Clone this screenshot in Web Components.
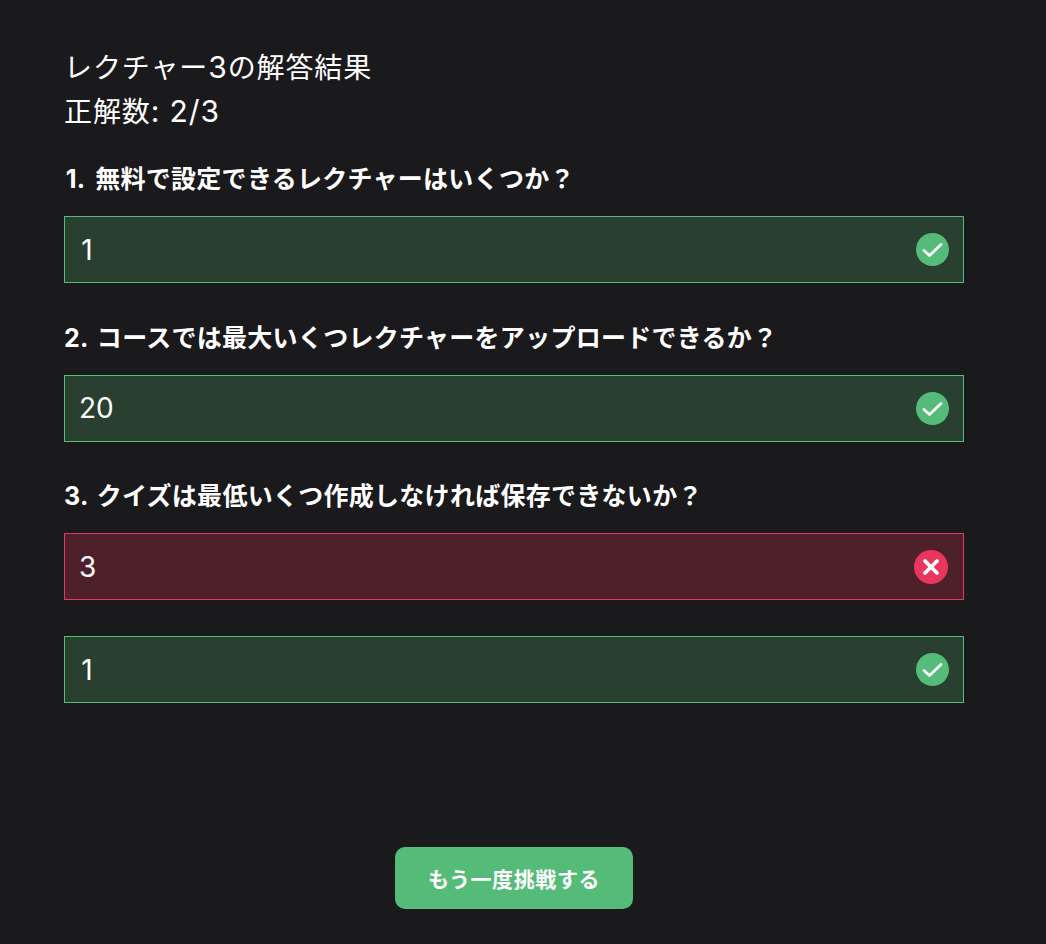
<!DOCTYPE html>
<html lang="ja">
<head>
<meta charset="utf-8">
<style>
  html, body { margin: 0; background: #1a191b; }
  body {
    color: #fff;
    font-family: Inter, "Noto Sans CJK JP", sans-serif;
  }
</style>
</head>
<body>
<quiz-result>
  <result-heading lecture="レクチャー3の解答結果" score="正解数: 2/3"></result-heading>
  <quiz-question number="1." label="無料で設定できるレクチャーはいくつか？">
    <answer-box status="correct" value="1"></answer-box>
  </quiz-question>
  <quiz-question number="2." label="コースでは最大いくつレクチャーをアップロードできるか？">
    <answer-box status="correct" value="20"></answer-box>
  </quiz-question>
  <quiz-question number="3." label="クイズは最低いくつ作成しなければ保存できないか？">
    <answer-box status="wrong" value="3"></answer-box>
    <answer-box status="correct" value="1"></answer-box>
  </quiz-question>
  <retry-button slot="action">もう一度挑戦する</retry-button>
</quiz-result>

<script>
class QuizResult extends HTMLElement {
  constructor() {
    super();
    this.attachShadow({ mode: "open" });
    this.shadowRoot.innerHTML = `
      <style>
        :host {
          display: block;
          width: 900px;
          height: 944px;
          box-sizing: border-box;
          margin-left: 64px;
          padding-top: 46px;
        }
        .list { display: flex; flex-direction: column; }
        .action { display: flex; justify-content: center; margin-top: 107.5px; }
      </style>
      <div class="list"><slot></slot></div>
      <div class="action"><slot name="action"></slot></div>
    `;
  }
}

class ResultHeading extends HTMLElement {
  constructor() {
    super();
    this.attachShadow({ mode: "open" });
  }
  // digits and punctuation are drawn a bit larger than the kana around them
  markLatin(text) {
    return text.replace(/[0-9:\/ ]+/g, (m) => `<span class="latin">${m}</span>`);
  }
  connectedCallback() {
    this.shadowRoot.innerHTML = `
      <style>
        :host {
          display: block;
          font-size: 28px;
          font-weight: 400;
          line-height: 44px;
          margin-bottom: 27px;
        }
        div { letter-spacing: 0.9px; height: 44px; }
        .latin { font-size: 30px; line-height: 1; }
      </style>
      <div>${this.markLatin(this.getAttribute("lecture"))}</div>
      <div>${this.markLatin(this.getAttribute("score"))}</div>
    `;
  }
}

class QuizQuestion extends HTMLElement {
  constructor() {
    super();
    this.attachShadow({ mode: "open" });
  }
  connectedCallback() {
    this.shadowRoot.innerHTML = `
      <style>
        :host { display: block; margin-bottom: 36.5px; }
        h2 {
          margin: 0 0 19px;
          font-size: 25px;
          font-weight: 700;
          line-height: 36px;
          letter-spacing: 0.28px;
          word-spacing: 2px;
        }
        /* same slot for every number, the narrow 1 sits in the middle */
        .num { display: inline-block; min-width: 23px; text-align: center; }
        .answers { display: flex; flex-direction: column; gap: 36px; }
      </style>
      <h2><span class="num">${this.getAttribute("number")}</span> ${this.getAttribute("label")}</h2>
      <div class="answers"><slot></slot></div>
    `;
  }
}

class AnswerBox extends HTMLElement {
  constructor() {
    super();
    this.attachShadow({ mode: "open" });
  }
  connectedCallback() {
    const wrong = this.getAttribute("status") === "wrong";
    const icon = wrong
      ? `<svg width="34" height="34" viewBox="0 0 34 34">
           <circle cx="17" cy="17" r="17" fill="#e8365f"/>
           <path d="M11 11 23 23M23 11 11 23" stroke="#fff" stroke-width="3.8" stroke-linecap="round" fill="none"/>
         </svg>`
      : `<svg width="33" height="33" viewBox="0 0 33 33">
           <circle cx="16.5" cy="16.5" r="16.5" fill="#55bb78"/>
           <path d="M8 17.5 13.5 22.5 25 11.5" stroke="#fff" stroke-width="2.8" stroke-linecap="round" stroke-linejoin="round" fill="none"/>
         </svg>`;
    this.shadowRoot.innerHTML = `
      <style>
        :host {
          display: flex;
          align-items: center;
          justify-content: space-between;
          box-sizing: border-box;
          height: 67px;
          padding: 0 ${wrong ? 15 : 14}px 0 14px;
          border: 1px solid ${wrong ? "#e8365f" : "#55bb78"};
          background: ${wrong ? "#4e202a" : "#293f30"};
          font-size: 28px;
          line-height: 40px;
          color: #fff;
        }
        .value { min-width: 16px; text-align: center; }
        svg { display: block; }
      </style>
      <span class="value">${this.getAttribute("value")}</span>
      ${icon}
    `;
  }
}

class RetryButton extends HTMLElement {
  constructor() {
    super();
    this.attachShadow({ mode: "open" });
    this.shadowRoot.innerHTML = `
      <style>
        :host {
          display: flex;
          align-items: center;
          justify-content: center;
          width: 238px;
          height: 62px;
          border-radius: 10px;
          background: #55bb78;
          color: #fff;
          font-size: 21px;
          font-weight: 700;
          letter-spacing: 0.6px;
        }
      </style>
      <slot></slot>
    `;
  }
}

customElements.define("quiz-result", QuizResult);
customElements.define("result-heading", ResultHeading);
customElements.define("quiz-question", QuizQuestion);
customElements.define("answer-box", AnswerBox);
customElements.define("retry-button", RetryButton);
</script>
</body>
</html>
